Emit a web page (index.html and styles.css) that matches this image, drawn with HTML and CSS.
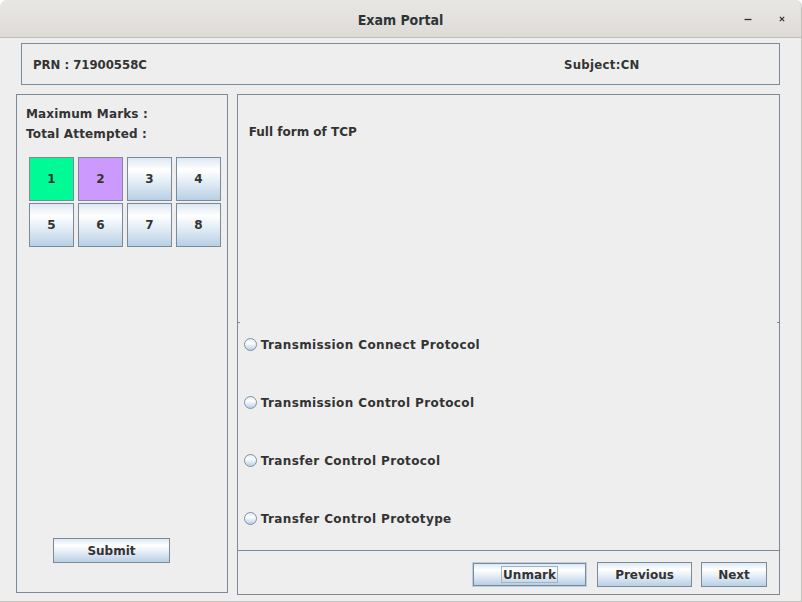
FILE: index.html
```html
<!DOCTYPE html>
<html>
<head>
<meta charset="utf-8">
<title>Exam Portal</title>
<link rel="stylesheet" href="styles.css">
</head>
<body>
<div class="window">
  <div class="titlebar">
    <span class="title">Exam Portal</span>
    <div class="controls">
      <svg class="ctl" width="10" height="10" viewBox="0 0 10 10"><path d="M1.5 5.5h7" stroke="#2e3436" stroke-width="1.3"/></svg>
      <svg class="ctl" width="10" height="10" viewBox="0 0 10 10"><path d="M2.8 2.8l4.4 4.4M7.2 2.8l-4.4 4.4" stroke="#2e3436" stroke-width="1.2"/></svg>
    </div>
  </div>
  <div class="content">
    <div class="info-panel">
      <span class="prn">PRN : 71900558C</span>
      <span class="subject">Subject:CN</span>
    </div>
    <div class="main">
      <div class="side-panel">
        <div class="stat">Maximum Marks :</div>
        <div class="stat">Total Attempted :</div>
        <div class="qgrid">
          <button class="qbtn answered">1</button>
          <button class="qbtn marked">2</button>
          <button class="qbtn">3</button>
          <button class="qbtn">4</button>
          <button class="qbtn">5</button>
          <button class="qbtn">6</button>
          <button class="qbtn">7</button>
          <button class="qbtn">8</button>
        </div>
        <button class="btn submit">Submit</button>
      </div>
      <div class="question-panel">
        <div class="question">Full form of TCP</div>
        <div class="divider"></div>
        <div class="options">
          <label class="option"><span class="radio"></span>Transmission Connect Protocol</label>
          <label class="option"><span class="radio"></span>Transmission Control Protocol</label>
          <label class="option"><span class="radio"></span>Transfer Control Protocol</label>
          <label class="option"><span class="radio"></span>Transfer Control Prototype</label>
        </div>
        <div class="actions">
          <button class="btn unmark"><span class="focus">Unmark</span></button>
          <button class="btn previous">Previous</button>
          <button class="btn next">Next</button>
        </div>
      </div>
    </div>
  </div>
</div>
</body>
</html>
```

FILE: styles.css
```css
html, body {
  margin: 0;
  padding: 0;
  background: #ffffff;
}

.window {
  width: 802px;
  height: 602px;
  box-sizing: border-box;
  background: #eeeeee;
  border-right: 1px solid #c4c1bd;
  border-bottom: 1px solid #c4c1bd;
  border-radius: 7px 7px 0 0;
  overflow: hidden;
  display: flex;
  flex-direction: column;
  font-family: "DejaVu Sans", sans-serif;
  color: #333333;
}

.titlebar {
  height: 37px;
  flex: 0 0 37px;
  border-bottom: 1px solid #c2bdb8;
  background: linear-gradient(#e9e7e4, #dedbd7);
  position: relative;
  display: flex;
  align-items: center;
  justify-content: center;
}

.title {
  font-family: "DejaVu Sans Condensed", "DejaVu Sans", sans-serif;
  font-stretch: condensed;
  font-weight: bold;
  font-size: 14px;
  color: #2e3436;
  margin-top: 2px;
}

.controls {
  position: absolute;
  right: 14px;
  top: 14px;
  display: flex;
  gap: 24px;
}

.ctl {
  display: block;
}

.content {
  flex: 1;
  padding: 5px 21px 0 16px;
  display: flex;
  flex-direction: column;
}

.info-panel {
  margin-left: 5px;
  height: 42px;
  box-sizing: border-box;
  border: 1px solid #7a8a99;
  display: flex;
  align-items: center;
  font-family: "DejaVu Sans Condensed", "DejaVu Sans", sans-serif;
  font-stretch: condensed;
  font-weight: bold;
  font-size: 13px;
  color: #333333;
  padding-top: 1px;
}

.prn {
  flex: 0 0 542px;
  padding-left: 11px;
  box-sizing: border-box;
}

.subject {
  letter-spacing: 0.3px;
}

.main {
  margin-top: 9px;
  display: flex;
  align-items: flex-start;
  gap: 9px;
}

.side-panel {
  width: 212px;
  height: 499px;
  box-sizing: border-box;
  border: 1px solid #7a8a99;
  display: flex;
  flex-direction: column;
  padding-top: 9px;
}

.stat {
  font-size: 12px;
  font-weight: bold;
  line-height: 20px;
  padding-left: 9px;
  letter-spacing: 0.15px;
}

.qgrid {
  margin: 13px 0 0 12px;
  display: grid;
  grid-template-columns: repeat(4, 45px);
  grid-auto-rows: 44px;
  column-gap: 4px;
  row-gap: 2px;
}

.qbtn, .btn {
  font-family: "DejaVu Sans", sans-serif;
  font-weight: bold;
  font-size: 12px;
  color: #333333;
  border: 1px solid #7a8a99;
  background: linear-gradient(#dde8f3 0%, #ffffff 28%, #e6eef6 55%, #b8cfe5 100%);
  padding: 0;
  margin: 0;
  box-sizing: border-box;
}

.qbtn.answered {
  background: #00fa96;
}

.qbtn.marked {
  background: #cc99ff;
}

.submit {
  margin: auto 0 29px 36px;
  width: 117px;
  height: 25px;
}

.question-panel {
  width: 544px;
  height: 501px;
  box-sizing: border-box;
  border: 1px solid #7a8a99;
  display: flex;
  flex-direction: column;
}

.question {
  height: 227px;
  box-sizing: border-box;
  padding: 29px 0 0 11px;
  font-size: 12px;
  font-weight: bold;
  line-height: 16px;
}

.divider {
  height: 1px;
  position: relative;
}

.divider::before,
.divider::after {
  content: "";
  position: absolute;
  top: 0;
  width: 2px;
  height: 1px;
  background: #7a8a99;
}

.divider::before { left: 0; }
.divider::after { right: 0; }

.options {
  height: 227px;
  box-sizing: border-box;
  padding: 12px 0 0 6px;
  display: flex;
  flex-direction: column;
  gap: 38px;
}

.option {
  height: 20px;
  display: flex;
  align-items: center;
  gap: 4px;
  font-size: 12px;
  font-weight: bold;
  letter-spacing: 0.38px;
}

.radio {
  width: 13px;
  height: 13px;
  box-sizing: border-box;
  border-radius: 50%;
  border: 1px solid #8090a0;
  background: linear-gradient(#e4ecf4 0%, #ffffff 35%, #b8cfe5 100%);
  margin-top: -1px;
}

.actions {
  flex: 1;
  border-top: 1px solid #7a8a99;
  display: flex;
  justify-content: flex-end;
  align-items: flex-start;
  padding: 11px 12px 0 0;
  gap: 9px;
}

.actions .btn {
  height: 25px;
}

.unmark {
  width: 113px;
  height: 23px !important;
  margin: 1px 1px 0 1px;
  box-shadow: 0 0 0 1px #b8cfe5;
  display: flex;
  align-items: center;
  justify-content: center;
}

.unmark .focus {
  border: 1px solid #a3b3c3;
  padding: 1px 1px 0 1px;
  line-height: 14px;
}

.previous {
  width: 95px;
  margin-left: 1px;
}

.next {
  width: 66px;
}
```
